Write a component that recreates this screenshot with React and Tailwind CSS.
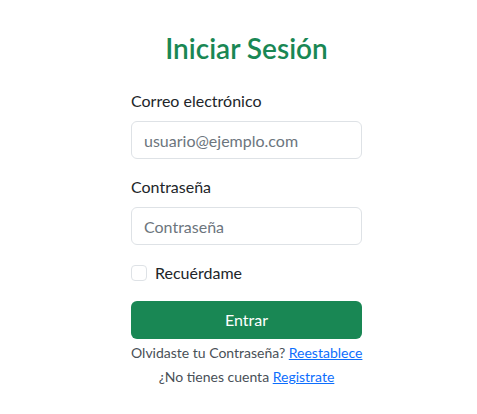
export default function App() {
  return (
    <div className="min-h-[414px] bg-white font-['Lato',sans-serif] text-[#212529]">
      <div className="ml-[131px] w-[231px] pt-[28px]">
        <h1 className="text-center text-[28px] font-semibold leading-[40px] text-[#198754]">
          Iniciar Sesión
        </h1>
        <form className="mt-[21px]">
          <label className="block text-[16px] leading-6">Correo electrónico</label>
          <input
            type="email"
            placeholder="usuario@ejemplo.com"
            className="mt-2 block h-[38px] w-full rounded-md border border-[#dee2e6] px-3 text-[16px] placeholder:text-[#6c757d] outline-none"
          />
          <label className="mt-4 block text-[16px] leading-6">Contraseña</label>
          <input
            type="password"
            placeholder="Contraseña"
            className="mt-2 block h-[38px] w-full rounded-md border border-[#dee2e6] px-3 text-[16px] placeholder:text-[#6c757d] outline-none"
          />
          <div className="mt-4 flex items-center gap-2">
            <span className="block h-4 w-4 rounded-[4px] border border-[#dee2e6] bg-white" />
            <span className="text-[16px] leading-6">Recuérdame</span>
          </div>
          <button
            type="button"
            className="mt-4 block h-[38px] w-full rounded-md bg-[#198754] text-[16px] text-white"
          >
            Entrar
          </button>
          <p className="mt-1 whitespace-nowrap text-center text-[14px] leading-[20px] text-[#495057]">
            Olvidaste tu Contraseña? <a href="#" className="text-[#0d6efd] underline">Reestablece</a>
          </p>
          <p className="mt-1 whitespace-nowrap text-center text-[14px] leading-[20px] text-[#495057]">
            ¿No tienes cuenta <a href="#" className="text-[#0d6efd] underline">Registrate</a>
          </p>
        </form>
      </div>
    </div>
  );
}
